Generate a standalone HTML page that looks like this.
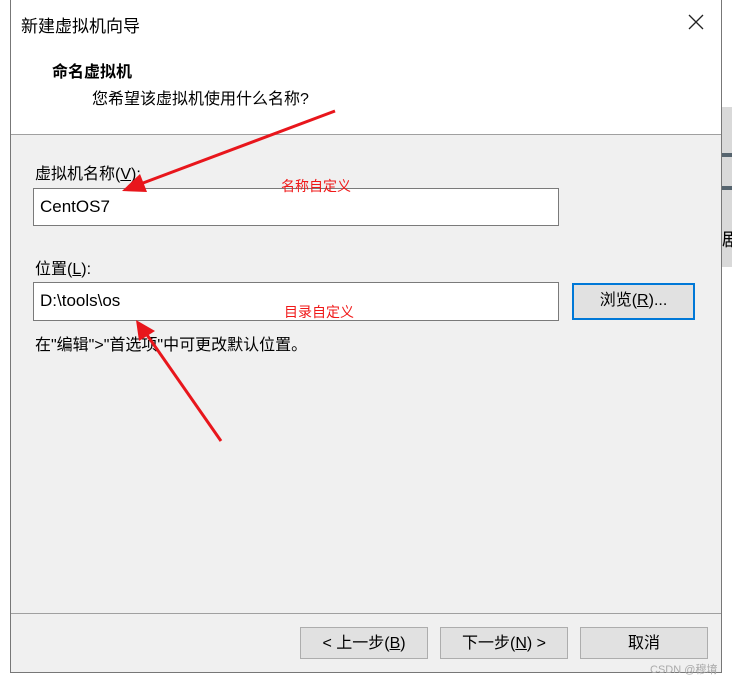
<!DOCTYPE html>
<html><head><meta charset="utf-8"><style>
body{margin:0;width:732px;height:683px;background:#fff;position:relative;overflow:hidden;font-family:"Liberation Sans","Noto Sans CJK SC",sans-serif;color:#000}
.a{position:absolute}
.t{font-size:16px;white-space:nowrap}
.btn{position:absolute;background:#e1e1e1;border:1px solid #adadad;box-sizing:border-box;font-size:16px;text-align:center;line-height:31px}
.in{position:absolute;background:#fff;border:1px solid #7a7a7a;box-sizing:border-box;font-size:17px;padding-left:6px;line-height:36px}
u{text-decoration:underline}
</style></head><body>
<div class="a" style="left:10px;top:0;width:712px;height:673px;border-left:1px solid #777;border-right:1px solid #777;border-bottom:1px solid #777;box-sizing:border-box;background:#f0f0f0"></div>
<div class="a" style="left:11px;top:0;width:710px;height:134px;background:#fff;border-bottom:1px solid #a0a0a0"></div>
<div class="a" style="left:722px;top:107px;width:10px;height:160px;background:#d9d9d9"></div>
<div class="a" style="left:722px;top:153px;width:10px;height:4px;background:#56646e"></div>
<div class="a" style="left:722px;top:186px;width:10px;height:4px;background:#56646e"></div>
<div class="a t" style="left:722px;top:226px;font-size:18px">剧</div>
<div class="a t" style="left:21px;top:12px;font-size:17px">新建虚拟机向导</div>
<svg class="a" style="left:686px;top:12px" width="20" height="20"><path d="M3 3L17 17M17 3L3 17" stroke="#222" stroke-width="1.3"/></svg>
<div class="a t" style="left:52px;top:58px;font-weight:bold">命名虚拟机</div>
<div class="a t" style="left:92px;top:85px">您希望该虚拟机使用什么名称?</div>
<div class="a t" style="left:35px;top:160px">虚拟机名称(<u>V</u>):</div>
<div class="in" style="left:33px;top:188px;width:526px;height:38px">CentOS7</div>
<div class="a t" style="left:281px;top:176px;color:#f01818;font-size:14px">名称自定义</div>
<div class="a t" style="left:35px;top:255px">位置(<u>L</u>):</div>
<div class="in" style="left:33px;top:282px;width:526px;height:39px">D:\tools\os</div>
<div class="a t" style="left:284px;top:302px;color:#f01818;font-size:14px">目录自定义</div>
<div class="btn" style="left:572px;top:283px;width:123px;height:37px;border:2px solid #0078d7;line-height:31px">浏览(<u>R</u>)...</div>
<div class="a t" style="left:35px;top:331px">在"编辑"&gt;"首选项"中可更改默认位置。</div>
<div class="a" style="left:11px;top:613px;width:710px;height:1px;background:#a0a0a0"></div>
<div class="btn" style="left:300px;top:627px;width:128px;height:32px">&lt; 上一步(<u>B</u>)</div>
<div class="btn" style="left:440px;top:627px;width:128px;height:32px">下一步(<u>N</u>) &gt;</div>
<div class="btn" style="left:580px;top:627px;width:128px;height:32px">取消</div>
<div class="a t" style="left:650px;top:661px;font-size:11px;color:#aaa">CSDN @穆堉</div>
<svg class="a" style="left:0;top:0" width="732" height="683">
<line x1="335" y1="111" x2="135" y2="186" stroke="#e8161c" stroke-width="3"/>
<polygon points="122,191 140,174 147,192" fill="#e8161c"/>
<line x1="221" y1="441" x2="145" y2="332" stroke="#e8161c" stroke-width="3"/>
<polygon points="136,320 155,331 139,341" fill="#e8161c"/>
</svg>
</body></html>
